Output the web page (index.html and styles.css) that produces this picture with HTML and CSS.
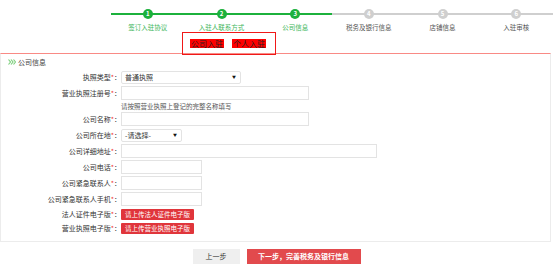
FILE: index.html
```html
<!DOCTYPE html>
<html lang="zh-CN">
<head>
    <meta charset="UTF-8">
    <title>入驻 - 公司信息</title>
    <link rel="stylesheet" href="styles.css">
</head>
<body>
<div class="steps">
    <div class="step done"><span class="dot">1</span><span class="name">签订入驻协议</span></div>
    <div class="step done"><span class="dot">2</span><span class="name">入驻人联系方式</span></div>
    <div class="step done"><span class="dot">3</span><span class="name">公司信息</span></div>
    <div class="step"><span class="dot">4</span><span class="name">税务及银行信息</span></div>
    <div class="step"><span class="dot">5</span><span class="name">店铺信息</span></div>
    <div class="step"><span class="dot">6</span><span class="name">入驻审核</span></div>
</div>

<div class="type-box">
    <span class="type-btn">公司入驻</span>
    <span class="type-btn">个人入驻</span>
</div>

<div class="panel">
    <div class="panel-title">
        <svg class="chev" width="8" height="6" viewBox="0 0 8 6">
            <path d="M0.5 0.5 L2.5 3 L0.5 5.5 M3 0.5 L5 3 L3 5.5 M5.5 0.5 L7.5 3 L5.5 5.5" fill="none" stroke="#7fd07f" stroke-width="1.2"/>
        </svg>
        公司信息
    </div>

    <div class="row">
        <label>执照类型<em>*</em>：</label>
        <div class="select w120">普通执照<i>▼</i></div>
    </div>
    <div class="row">
        <label>营业执照注册号<em>*</em>：</label>
        <div class="input w188"></div>
    </div>
    <div class="hint">请按照营业执照上登记的完整名称填写</div>
    <div class="row">
        <label>公司名称<em>*</em>：</label>
        <div class="input w188"></div>
    </div>
    <div class="row">
        <label>公司所在地<em>*</em>：</label>
        <div class="select w61">-请选择-<i>▼</i></div>
    </div>
    <div class="row">
        <label>公司详细地址<em>*</em>：</label>
        <div class="input w256"></div>
    </div>
    <div class="row">
        <label>公司电话<em>*</em>：</label>
        <div class="input w81"></div>
    </div>
    <div class="row">
        <label>公司紧急联系人<em>*</em>：</label>
        <div class="input w81"></div>
    </div>
    <div class="row">
        <label>公司紧急联系人手机<em>*</em>：</label>
        <div class="input w81"></div>
    </div>
    <div class="row short">
        <label>法人证件电子版<em>*</em>：</label>
        <span class="upload">请上传法人证件电子版</span>
    </div>
    <div class="row short">
        <label>营业执照电子版<em>*</em>：</label>
        <span class="upload">请上传营业执照电子版</span>
    </div>
</div>

<div class="actions">
    <span class="btn prev">上一步</span>
    <span class="btn next">下一步，完善税务及银行信息</span>
</div>
</body>
</html>
```
FILE: styles.css
```css
body {
    margin: 0;
    font-family: "Noto Sans CJK SC", "Liberation Sans", sans-serif;
    font-size: 7px;
    color: #333;
    background: #fff;
}
.steps {
    display: flex;
    margin-left: 111px;
    height: 32px;
}
.step {
    position: relative;
    width: 74px;
    display: flex;
    flex-direction: column;
    align-items: center;
}
.step::before {
    content: "";
    position: absolute;
    left: 0;
    right: 0;
    top: 13px;
    height: 2px;
    background: #cfcfcf;
}
.step.done::before {
    background: #1cb13c;
}
.dot {
    position: relative;
    margin-top: 9px;
    width: 10px;
    height: 10px;
    border-radius: 50%;
    background: #cfcfcf;
    color: #fff;
    font-size: 6px;
    font-weight: bold;
    line-height: 10px;
    text-align: center;
}
.step.done .dot {
    background: #1cb13c;
}
.name {
    margin-top: 3px;
    font-size: 6.5px;
    color: #555;
    white-space: nowrap;
}
.step.done .name {
    color: #3db65a;
}
.type-box {
    position: relative;
    margin-left: 182px;
    width: 92px;
    height: 21px;
    border: 1px solid #f01818;
    display: flex;
    align-items: center;
    justify-content: flex-end;
    gap: 8px;
    padding-right: 9px;
    box-sizing: border-box;
    width: 94px;
    height: 23px;
    margin-bottom: -2px;
    z-index: 1;
    background: transparent;
}
.type-btn {
    background: #ff0000;
    color: #222;
    font-size: 8px;
    line-height: 9px;
    padding: 0 1px;
}
.panel {
    width: 549px;
    border: 1px solid #ececec;
    border-top: 1px solid #f98a85;
    padding-bottom: 5px;
}
.panel-title {
    height: 16px;
    display: flex;
    align-items: center;
    padding-left: 7px;
    gap: 2px;
    font-size: 7px;
    color: #444;
}
.row {
    display: flex;
    align-items: center;
    height: 14px;
    margin-bottom: 2px;
}
.row.short {
    height: 12px;
}
.row label {
    width: 120px;
    text-align: right;
    white-space: nowrap;
}
.row label em {
    color: #e33;
    font-style: normal;
}
.input, .select {
    height: 14px;
    box-sizing: border-box;
    border: 1px solid #e3e3e3;
    background: #fff;
}
.select {
    height: 13px;
    display: flex;
    align-items: center;
    justify-content: space-between;
    padding: 0 4px 0 3px;
    color: #333;
    border-radius: 2px;
}
.select i {
    font-style: normal;
    font-size: 4px;
    color: #111;
}
.w120 { width: 120px; }
.w61 { width: 61px; }
.w188 { width: 188px; }
.w256 { width: 256px; }
.w81 { width: 81px; }
.hint {
    margin-left: 120px;
    height: 8px;
    line-height: 8px;
    font-size: 6.5px;
    color: #555;
    margin-bottom: 2px;
}
.upload {
    background: #e0353b;
    color: #fff;
    font-size: 6.5px;
    line-height: 11px;
    height: 11px;
    padding: 0 4px;
    border-radius: 1px;
}
.actions {
    display: flex;
    justify-content: center;
    gap: 7px;
    margin-top: 7px;
}
.btn {
    height: 15px;
    line-height: 15px;
    text-align: center;
    font-size: 7px;
}
.prev {
    width: 47px;
    background: #efefef;
    color: #333;
}
.next {
    width: 114px;
    background: #e24a4d;
    color: #fff;
    font-weight: bold;
}
```
